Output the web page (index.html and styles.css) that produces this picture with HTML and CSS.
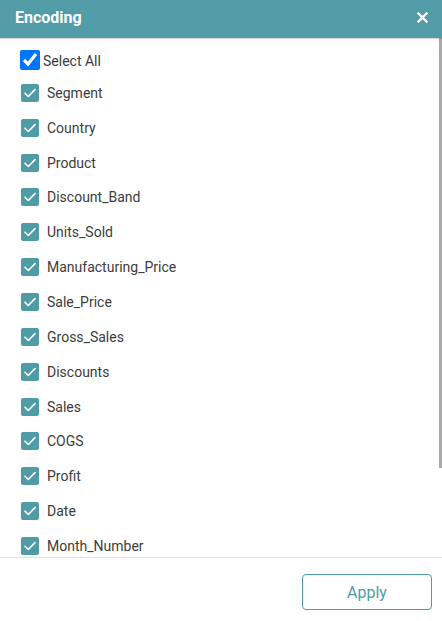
FILE: index.html
```html
<!DOCTYPE html>
<html lang="en">

<head>
    <meta charset="UTF-8">
    <meta name="viewport" content="width=device-width, initial-scale=1.0">
    <title>Encoding</title>
    <link rel="stylesheet" href="styles.css">
</head>

<body>
    <div class="dialog">
        <div class="dialog-header">
            <span class="dialog-title">Encoding</span>
            <svg class="dialog-close" width="11" height="11" viewBox="0 0 11 11">
                <path d="M1.5 1.5l8 8M9.5 1.5l-8 8" stroke="#fff" stroke-width="2.3" stroke-linecap="square" />
            </svg>
        </div>
        <div class="list-wrap">
            <div class="field-list">
                <label class="select-all">
                    <input type="checkbox" checked>
                    <span>Select All</span>
                </label>
                <label class="field"><span class="box"></span>Segment</label>
                <label class="field"><span class="box"></span>Country</label>
                <label class="field"><span class="box"></span>Product</label>
                <label class="field"><span class="box"></span>Discount_Band</label>
                <label class="field"><span class="box"></span>Units_Sold</label>
                <label class="field"><span class="box"></span>Manufacturing_Price</label>
                <label class="field"><span class="box"></span>Sale_Price</label>
                <label class="field"><span class="box"></span>Gross_Sales</label>
                <label class="field"><span class="box"></span>Discounts</label>
                <label class="field"><span class="box"></span>Sales</label>
                <label class="field"><span class="box"></span>COGS</label>
                <label class="field"><span class="box"></span>Profit</label>
                <label class="field"><span class="box"></span>Date</label>
                <label class="field"><span class="box"></span>Month_Number</label>
            </div>
            <div class="scroll-thumb"></div>
        </div>
        <div class="dialog-footer">
            <button class="apply">Apply</button>
        </div>
    </div>
</body>

</html>
```

FILE: styles.css
```css
*,
*::before,
*::after {
    box-sizing: border-box;
    font-family: Roboto, "Liberation Sans", sans-serif;
}

body {
    margin: 0;
    padding: 0;
    background: #fff;
}

.dialog {
    width: 442px;
    height: 621px;
    display: flex;
    flex-direction: column;
}

.dialog-header {
    height: 38px;
    flex: none;
    background: #519ca6;
    display: flex;
    align-items: center;
    justify-content: space-between;
    padding: 0 14px 4px 15px;
    box-shadow: 0 1px 1px rgba(0, 0, 0, 0.15);
    position: relative;
    z-index: 1;
}

.dialog-title {
    color: #fff;
    font-size: 16px;
    font-weight: bold;
}

.dialog-close {
    display: block;
}

.list-wrap {
    flex: 1;
    position: relative;
    overflow: hidden;
}

.field-list {
    height: 100%;
    overflow: hidden;
    padding: 11px 0 0 20px;
}

/* scrollbar thumb drawn over the list */
.scroll-thumb {
    position: absolute;
    top: 0;
    right: 0;
    width: 3px;
    height: 430px;
    background: #aaaaaa;
}

.select-all {
    display: flex;
    align-items: center;
    height: 21px;
    margin-bottom: 5.5px;
    font-size: 14px;
    color: #3c3c3c;
}

.select-all input {
    width: 20px;
    height: 20px;
    margin: 0 3px 0 0;
    accent-color: #0075ff;
}

.select-all span {
    padding-top: 3px;
}

.field {
    display: flex;
    align-items: center;
    height: 34.85px;
    padding-left: 1px;
    font-size: 14px;
    color: #3c3c3c;
}

.box {
    width: 18px;
    height: 18px;
    margin-right: 8px;
    border-radius: 2px;
    background: #4f9ca6 url("data:image/svg+xml,%3Csvg xmlns='http://www.w3.org/2000/svg' viewBox='0 0 18 18'%3E%3Cpath d='M4 9.2l3.3 3.3L14 5.6' fill='none' stroke='%23fff' stroke-width='1.6' stroke-linecap='round' stroke-linejoin='round'/%3E%3C/svg%3E") center / 18px 18px no-repeat;
}

.dialog-footer {
    flex: none;
    height: 64px;
    border-top: 1px solid #e0e0e0;
    display: flex;
    justify-content: flex-end;
    padding: 16px 10px 0 0;
}

.apply {
    width: 130px;
    height: 36px;
    border: 1px solid #4f9ca6;
    border-radius: 4px;
    background: #fff;
    color: #4f9ca6;
    font-size: 16px;
    cursor: pointer;
}
```
